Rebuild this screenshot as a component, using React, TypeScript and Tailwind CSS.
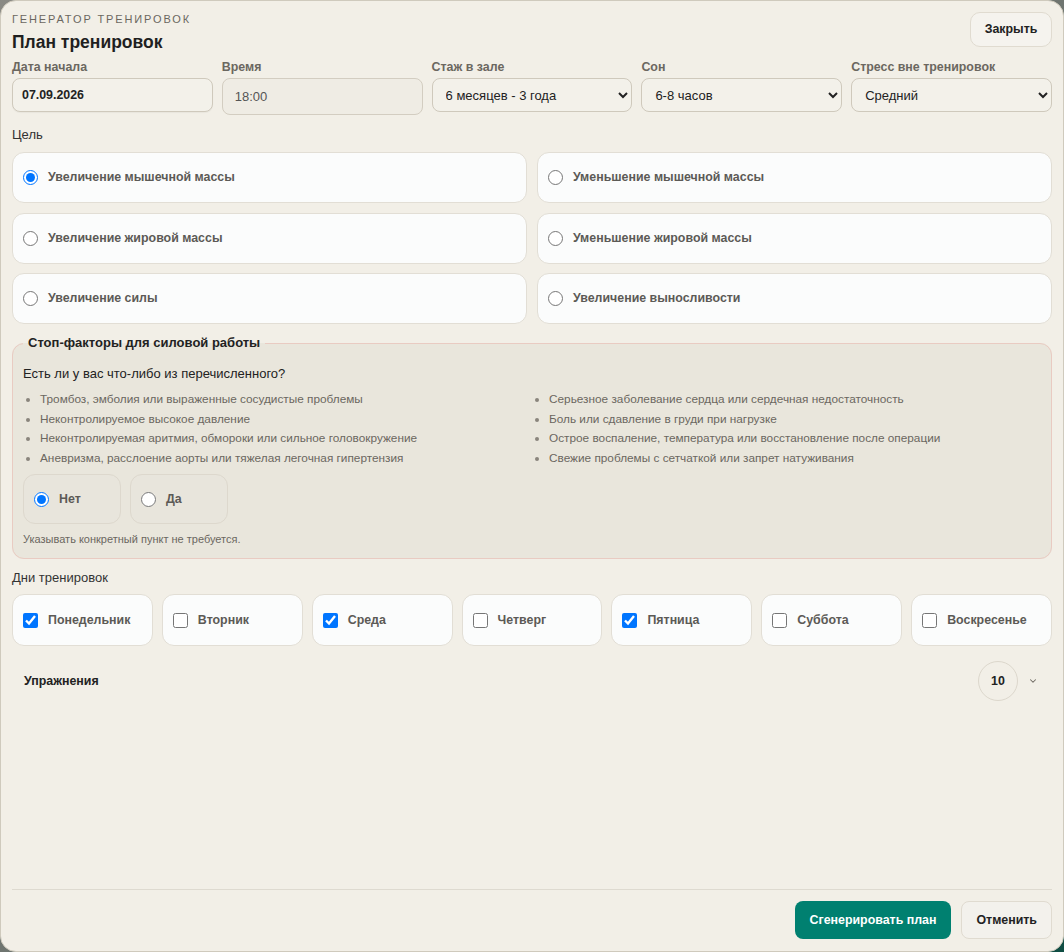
import { ChevronDown } from 'lucide-react';

const fields = [
  { label: 'Стаж в зале', value: '6 месяцев - 3 года', options: ['Меньше 6 месяцев', '6 месяцев - 3 года', 'Больше 3 лет'] },
  { label: 'Сон', value: '6-8 часов', options: ['Меньше 6 часов', '6-8 часов', 'Больше 8 часов'] },
  { label: 'Стресс вне тренировок', value: 'Средний', options: ['Низкий', 'Средний', 'Высокий'] },
];

const goals = [
  { name: 'Увеличение мышечной массы', checked: true },
  { name: 'Уменьшение мышечной массы', checked: false },
  { name: 'Увеличение жировой массы', checked: false },
  { name: 'Уменьшение жировой массы', checked: false },
  { name: 'Увеличение силы', checked: false },
  { name: 'Увеличение выносливости', checked: false },
];

const risksLeft = [
  'Тромбоз, эмболия или выраженные сосудистые проблемы',
  'Неконтролируемое высокое давление',
  'Неконтролируемая аритмия, обмороки или сильное головокружение',
  'Аневризма, расслоение аорты или тяжелая легочная гипертензия',
];

const risksRight = [
  'Серьезное заболевание сердца или сердечная недостаточность',
  'Боль или сдавление в груди при нагрузке',
  'Острое воспаление, температура или восстановление после операции',
  'Свежие проблемы с сетчаткой или запрет натуживания',
];

const days = [
  { name: 'Понедельник', checked: true },
  { name: 'Вторник', checked: false },
  { name: 'Среда', checked: true },
  { name: 'Четверг', checked: false },
  { name: 'Пятница', checked: true },
  { name: 'Суббота', checked: false },
  { name: 'Воскресенье', checked: false },
];

const Label = ({ children }: { children: string }) => (
  <div className="text-[12.4px] leading-4 font-bold text-[#6b6760]">{children}</div>
);

const App = () => {
  return (
    <div
      className="h-[952px] w-full bg-linear-to-br from-[#8a8a84] via-[#6f7570] to-[#0e4d43]"
      style={{ fontFamily: '"Liberation Sans", Arial, sans-serif' }}
    >
      <div className="flex h-full flex-col rounded-2xl border border-[#cfcabd] bg-[#f2efe7] px-[11px] pt-[11px] pb-3 text-[#222]">
        <header className="flex items-start justify-between">
          <div>
            <div className="text-[11px] leading-[14px] tracking-[0.17em] text-[#6b6760]">
              ГЕНЕРАТОР ТРЕНИРОВОК
            </div>
            <h1 className="mt-1 text-[17.5px] leading-6 font-bold text-[#1f1f1f]">План тренировок</h1>
          </div>
          <button className="h-[35px] w-[82px] rounded-[10px] border border-[#e0dbd0] bg-[#f5f3ee] text-[12.4px] font-bold text-[#222]">
            Закрыть
          </button>
        </header>

        <div className="mt-[5px] grid grid-cols-5 items-start gap-x-[9px]">
          <div className="flex flex-col gap-[3px]">
            <Label>Дата начала</Label>
            <div className="flex h-[34px] items-center rounded-lg border border-[#cfc9bc] bg-[#f3f1ea] px-[9px] text-[12.4px] font-bold text-[#222] shadow-[0_1px_1px_rgba(0,0,0,0.04)]">
              07.09.2026
            </div>
          </div>
          <div className="flex flex-col gap-[3px]">
            <Label>Время</Label>
            <div className="flex h-[37px] items-center rounded-lg border border-[#d3cdc1] bg-[#efece4] px-3 text-[13px] text-[#555]">
              18:00
            </div>
          </div>
          {fields.map((f) => (
            <div key={f.label} className="flex flex-col gap-[3px]">
              <Label>{f.label}</Label>
              <select
                defaultValue={f.value}
                className="h-[34px] w-full rounded-lg border border-[#cfc9bc] bg-[#f3f1ea] pl-[9px] pr-1 text-[13px] text-[#222]"
              >
                {f.options.map((o) => (
                  <option key={o}>{o}</option>
                ))}
              </select>
            </div>
          ))}
        </div>

        <div className="mt-3 text-[13px] leading-4 text-[#333]">Цель</div>
        <div className="mt-[9px] grid grid-cols-2 gap-x-[10px] gap-y-[9.5px]">
          {goals.map((g) => (
            <label
              key={g.name}
              className="flex h-[51px] items-center gap-[10px] rounded-xl border border-[#e2ded5] bg-[#fbfcfc] px-[10px]"
            >
              <input type="radio" name="goal" defaultChecked={g.checked} className="m-0 h-[15px] w-[15px]" />
              <span className="text-[12.4px] font-bold text-[#5c5a56]">{g.name}</span>
            </label>
          ))}
        </div>

        <fieldset className="mt-[11px] rounded-xl border border-[#e9cbc2] bg-[#e9e6dc] px-[10px] pt-[15px] pb-3">
          <legend className="px-[5px] text-[13px] leading-4 font-bold text-[#222]">
            Стоп-факторы для силовой работы
          </legend>
          <div className="text-[13px] leading-4 text-[#222]">Есть ли у вас что-либо из перечисленного?</div>
          <div className="mt-[8px] grid grid-cols-2">
            {[risksLeft, risksRight].map((list, i) => (
              <ul key={i} className="list-disc pl-[17px] text-[11.8px] leading-[19.5px] text-[#6b6760] marker:text-[#8a857c]">
                {list.map((r) => (
                  <li key={r}>{r}</li>
                ))}
              </ul>
            ))}
          </div>
          <div className="mt-[6px] flex gap-[9px]">
            {[
              { name: 'Нет', checked: true },
              { name: 'Да', checked: false },
            ].map((o) => (
              <label
                key={o.name}
                className="flex h-[50px] w-[98px] items-center gap-[10px] rounded-xl border border-[#ddd8cd] bg-[#e8e5dc] px-[10px]"
              >
                <input type="radio" name="stop" defaultChecked={o.checked} className="m-0 h-[15px] w-[15px]" />
                <span className="text-[12.4px] font-bold text-[#5c5a56]">{o.name}</span>
              </label>
            ))}
          </div>
          <div className="mt-[8px] text-[11px] leading-[14px] text-[#6b6760]">
            Указывать конкретный пункт не требуется.
          </div>
        </fieldset>

        <div className="mt-[11px] text-[13px] leading-4 text-[#333]">Дни тренировок</div>
        <div className="mt-[8px] grid grid-cols-7 gap-[9px]">
          {days.map((d) => (
            <label
              key={d.name}
              className="flex h-[52px] items-center gap-[10px] rounded-xl border border-[#e2ded5] bg-[#fbfcfc] px-[10px]"
            >
              <input type="checkbox" defaultChecked={d.checked} className="m-0 h-[15px] w-[15px]" />
              <span className="text-[12.4px] font-bold text-[#5c5a56]">{d.name}</span>
            </label>
          ))}
        </div>

        <div className="mt-[15px] flex items-center justify-between pl-3 pr-[14px]">
          <span className="text-[12.4px] font-bold text-[#222]">Упражнения</span>
          <div className="flex items-center gap-[10px]">
            <span className="flex h-10 w-10 items-center justify-center rounded-full border border-[#dcd7cc] text-[12.4px] font-bold text-[#222]">
              10
            </span>
            <ChevronDown size={10} strokeWidth={2.5} className="text-[#6b6760]" />
          </div>
        </div>

        <div className="mt-auto flex items-center justify-end gap-[10px] border-t border-[#dedad0] pt-[11px]">
          <button className="h-[38px] rounded-lg bg-[#008070] px-[15px] text-[12.4px] font-bold text-white">
            Сгенерировать план
          </button>
          <button className="h-[38px] rounded-lg border border-[#e0dbd0] bg-[#f3f1ec] px-[14px] text-[12.4px] font-bold text-[#222]">
            Отменить
          </button>
        </div>
      </div>
    </div>
  );
};

export default App;
